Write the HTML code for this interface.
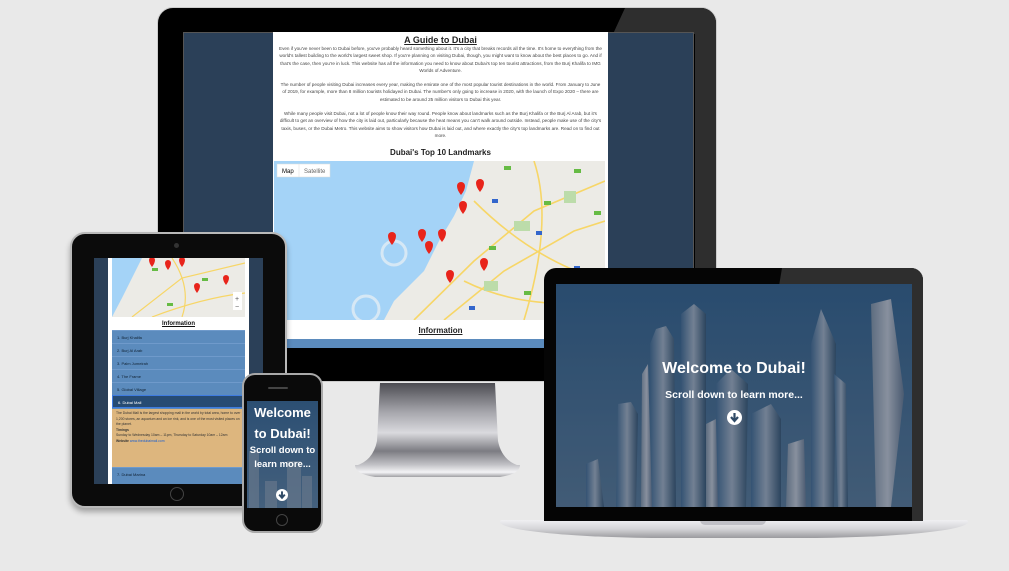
<!DOCTYPE html>
<html><head><meta charset="utf-8"><style>
*{margin:0;padding:0;box-sizing:border-box}
body{width:1009px;height:571px;background:#e9e9e9;position:relative;overflow:hidden;font-family:"Liberation Sans",sans-serif}
.a{position:absolute}
.p{font-size:4.6px;line-height:7.4px;color:#444;text-align:center}
.hero{font-family:"Liberation Sans Narrow","Liberation Sans",sans-serif;font-weight:bold;color:#fff;text-align:center}
.acc{position:absolute;left:0;width:100%;height:13px;font-size:4px;color:#123;padding-left:5px;line-height:13px;border-top:1px solid #6f9acb}
</style></head><body>

<!-- MONITOR -->
<div class="a" style="left:157px;top:7px;width:560px;height:375px;background:#000;border-radius:16px 16px 0 0;border:1px solid #ccc;overflow:hidden">
  <div class="a" style="left:455px;top:0;width:110px;height:26px;background:#2e2e2e;clip-path:polygon(12px 0,110px 0,110px 26px,0 26px)"></div>
  <div class="a" style="left:537px;top:0;width:30px;height:380px;background:#2e2e2e"></div>
</div>
<div class="a" style="left:183px;top:32px;width:511px;height:316px;background:#2b4058;border:1px solid #555"></div>
<div class="a" style="left:273px;top:32px;width:335px;height:316px;background:#fff;overflow:hidden">
  <div class="a" style="left:0;top:3px;width:100%;text-align:center;font-size:9px;font-weight:bold;text-decoration:underline;color:#222">A Guide to Dubai</div>
  <div class="a p" style="left:6px;top:13px;width:323px">Even if you've never been to Dubai before, you've probably heard something about it. It's a city that breaks records all the time. It's home to everything from the world's tallest building to the world's largest sweet shop. If you're planning on visiting Dubai, though, you might want to know about the best places to go. And if that's the case, then you're in luck. This website has all the information you need to know about Dubai's top ten tourist attractions, from the Burj Khalifa to IMG Worlds of Adventure.</div>
  <div class="a p" style="left:6px;top:49px;width:323px">The number of people visiting Dubai increases every year, making the emirate one of the most popular tourist destinations in the world. From January to June of 2019, for example, more than 8 million tourists holidayed in Dubai. The number's only going to increase in 2020, with the launch of Expo 2020 – there are estimated to be around 25 million visitors to Dubai this year.</div>
  <div class="a p" style="left:6px;top:78px;width:323px">While many people visit Dubai, not a lot of people know their way round. People know about landmarks such as the Burj Khalifa or the Burj Al Arab, but it's difficult to get an overview of how the city is laid out, particularly because the heat means you can't walk around outside. Instead, people make use of the city's taxis, buses, or the Dubai Metro. This website aims to show visitors how Dubai is laid out, and where exactly the city's top landmarks are. Read on to find out more.</div>
  <div class="a" style="left:0;top:116px;width:100%;text-align:center;font-size:8px;font-weight:bold;color:#222">Dubai's Top 10 Landmarks</div>
  <div class="a" style="left:0;top:294px;width:100%;text-align:center;font-size:8px;font-weight:bold;text-decoration:underline;color:#222">Information</div>
  <div class="a" style="left:0;top:307px;width:100%;height:9px;background:#5b8bbd"></div>
</div>
<svg class="a" style="left:274px;top:161px" width="331" height="159" viewBox="0 0 331 159">
  <rect width="331" height="159" fill="#a4d3f7"/>
  <polygon points="200,0 331,0 331,159 110,159 120,140 150,110 165,80 180,55 192,30" fill="#ecebe6"/>
  <circle cx="120" cy="92" r="12" fill="none" stroke="#d6e8f5" stroke-width="3"/>
  <circle cx="92" cy="148" r="13" fill="none" stroke="#d6e8f5" stroke-width="3"/>
  <g stroke="#f7d667" stroke-width="1.6" fill="none">
    <path d="M140,159 L200,100 L260,50 L331,20"/><path d="M170,159 L230,110 L300,70 L331,60"/>
    <path d="M200,40 Q260,100 331,120"/><path d="M260,0 Q280,60 250,159"/><path d="M190,120 Q250,150 331,140"/>
  </g>
  <g fill="#bcdcaa"><rect x="240" y="60" width="16" height="10"/><rect x="290" y="30" width="12" height="12"/><rect x="210" y="120" width="14" height="10"/></g>
  <g fill="#66bb44"><rect x="230" y="5" width="7" height="4"/><rect x="300" y="8" width="7" height="4"/><rect x="270" y="40" width="7" height="4"/><rect x="215" y="85" width="7" height="4"/><rect x="250" y="130" width="7" height="4"/><rect x="320" y="50" width="7" height="4"/></g>
  <g fill="#3366cc"><rect x="218" y="38" width="6" height="4"/><rect x="262" y="70" width="6" height="4"/><rect x="195" y="145" width="6" height="4"/><rect x="300" y="105" width="6" height="4"/></g>
  <rect x="3" y="3" width="53" height="13" fill="#fff" stroke="#ddd" stroke-width=".5"/>
  <text x="8" y="12" font-size="6" font-family="Liberation Sans" fill="#000">Map</text>
  <text x="30" y="12" font-size="6" font-family="Liberation Sans" fill="#666">Satellite</text>
  <line x1="25" y1="3" x2="25" y2="16" stroke="#ddd" stroke-width=".5"/>
  <g fill="#e8241b">
    <path d="M183,25 a4,4 0 1 1 8,0 q0,4 -4,9 q-4,-5 -4,-9z"/><path d="M202,22 a4,4 0 1 1 8,0 q0,4 -4,9 q-4,-5 -4,-9z"/>
    <path d="M185,44 a4,4 0 1 1 8,0 q0,4 -4,9 q-4,-5 -4,-9z"/><path d="M114,75 a4,4 0 1 1 8,0 q0,4 -4,9 q-4,-5 -4,-9z"/>
    <path d="M144,72 a4,4 0 1 1 8,0 q0,4 -4,9 q-4,-5 -4,-9z"/><path d="M164,72 a4,4 0 1 1 8,0 q0,4 -4,9 q-4,-5 -4,-9z"/>
    <path d="M151,84 a4,4 0 1 1 8,0 q0,4 -4,9 q-4,-5 -4,-9z"/><path d="M206,101 a4,4 0 1 1 8,0 q0,4 -4,9 q-4,-5 -4,-9z"/>
    <path d="M172,113 a4,4 0 1 1 8,0 q0,4 -4,9 q-4,-5 -4,-9z"/>
  </g>
</svg>
<!-- stand -->
<svg class="a" style="left:350px;top:381px" width="175" height="100" viewBox="0 0 175 100">
  <defs><linearGradient id="st" x1="0" y1="0" x2="0" y2="1"><stop offset="0" stop-color="#4c4c52"/><stop offset=".35" stop-color="#a6a6ac"/><stop offset=".6" stop-color="#dadade"/><stop offset=".82" stop-color="#7c7c82"/><stop offset="1" stop-color="#c8c8cc"/></linearGradient>
  <linearGradient id="bs" x1="0" y1="0" x2="0" y2="1"><stop offset="0" stop-color="#c4c4c8"/><stop offset=".6" stop-color="#f4f4f6"/><stop offset="1" stop-color="#a0a0a4"/></linearGradient></defs>
  <path d="M30,2 L145,2 L148,60 Q152,80 170,85 L5,85 Q23,80 27,60 Z" fill="url(#st)"/>
  <path d="M5,84 L170,84 Q170,93 150,96 L25,96 Q5,93 5,84Z" fill="url(#bs)"/>
</svg>

<!-- TABLET -->
<div class="a" style="left:70px;top:232px;width:217px;height:276px;background:#0b0b0b;border-radius:15px;border:2px solid #b9b9b9;box-shadow:0 4px 6px rgba(0,0,0,.3)"></div>
<div class="a" style="left:174px;top:243px;width:5px;height:5px;border-radius:50%;background:#333"></div>
<div class="a" style="left:170px;top:487px;width:14px;height:14px;border-radius:50%;border:1px solid #444"></div>
<div class="a" style="left:94px;top:258px;width:169px;height:226px;background:#2b4058;overflow:hidden">
  <div class="a" style="left:14px;top:0;width:141px;height:226px;background:#fff">
    <svg class="a" style="left:4px;top:0" width="133" height="59" viewBox="0 0 133 59">
      <rect width="133" height="59" fill="#ecebe6"/>
      <polygon points="0,0 30,0 10,40 0,59" fill="#a4d3f7"/>
      <g stroke="#f7d667" stroke-width="1.2" fill="none"><path d="M20,59 L70,20 L133,5"/><path d="M40,59 Q90,40 133,35"/><path d="M60,0 Q80,30 70,59"/></g>
      <g fill="#66bb44"><rect x="40" y="10" width="6" height="3"/><rect x="90" y="20" width="6" height="3"/><rect x="55" y="45" width="6" height="3"/></g>
      <g fill="#e8241b"><path d="M37,2 a3,3 0 1 1 6,0 q0,3 -3,7 q-3,-4 -3,-7z"/><path d="M53,5 a3,3 0 1 1 6,0 q0,3 -3,7 q-3,-4 -3,-7z"/><path d="M67,2 a3,3 0 1 1 6,0 q0,3 -3,7 q-3,-4 -3,-7z"/><path d="M111,20 a3,3 0 1 1 6,0 q0,3 -3,7 q-3,-4 -3,-7z"/><path d="M82,28 a3,3 0 1 1 6,0 q0,3 -3,7 q-3,-4 -3,-7z"/></g>
      <rect x="121" y="34" width="9" height="18" fill="#fff"/><text x="123" y="43" font-size="7" fill="#555">+</text><text x="123" y="51" font-size="7" fill="#555">−</text>
    </svg>
    <div class="a" style="left:0;top:63px;width:100%;text-align:center;font-size:6px;font-weight:bold;text-decoration:underline;color:#111">Information</div>
    <div class="a" style="left:4px;top:72px;width:133px;height:154px;background:#5b8bbd">
      <div class="acc" style="top:0">1. Burj Khalifa</div>
      <div class="acc" style="top:13px">2. Burj Al Arab</div>
      <div class="acc" style="top:26px">3. Palm Jumeirah</div>
      <div class="acc" style="top:39px">4. The Frame</div>
      <div class="acc" style="top:52px">5. Global Village</div>
      <div class="acc" style="top:65px;background:#264b73;color:#fff;border:1px solid #3e7be0">6. Dubai Mall</div>
      <div class="a" style="left:0;top:79px;width:133px;height:58px;background:#ddb67e;font-size:3.4px;line-height:5.5px;color:#333;padding:2px 4px">The Dubai Mall is the largest shopping mall in the world by total area, home to over 1,200 stores, an aquarium and an ice rink, and is one of the most visited places on the planet.<br><b>Timings</b><br>Sunday to Wednesday 10am – 11pm, Thursday to Saturday 10am – 12am<br><b>Website</b> <span style="color:#1a5fd0">www.thedubaimall.com</span></div>
      <div class="acc" style="top:137px">7. Dubai Marina</div>
    </div>
  </div>
</div>

<!-- LAPTOP -->
<div class="a" style="left:500px;top:520px;width:468px;height:18px;background:linear-gradient(#f0f0f2,#d4d4d7 50%,#9a9a9e);border-radius:2px 2px 40% 40%/2px 2px 100% 100%"></div>
<div class="a" style="left:700px;top:520px;width:66px;height:5px;background:#c0c0c6;border-radius:0 0 5px 5px"></div>
<div class="a" style="left:544px;top:268px;width:379px;height:253px;background:#050505;border-radius:12px 12px 0 0;overflow:hidden">
  <div class="a" style="left:235px;top:0;width:150px;height:18px;background:#2e2e2e;clip-path:polygon(3px 0,100% 0,100% 100%,0 100%)"></div>
  <div class="a" style="left:368px;top:0;width:12px;height:253px;background:#2e2e2e"></div>
</div>
<svg class="a" style="left:556px;top:284px" width="356" height="223" viewBox="0 0 356 223">
  <defs><linearGradient id="sky" x1="0" y1="0" x2="0" y2="1"><stop offset="0" stop-color="#2c5176"/><stop offset="1" stop-color="#4b6580"/></linearGradient>
  <linearGradient id="bd" x1="0" y1="0" x2="1" y2="0"><stop offset="0" stop-color="#3a5a7c"/><stop offset=".5" stop-color="#8893a4"/><stop offset="1" stop-color="#2f4862"/></linearGradient>
  <linearGradient id="bd2" x1="0" y1="0" x2="1" y2="0"><stop offset="0" stop-color="#6d7a8c"/><stop offset=".5" stop-color="#a3a7b2"/><stop offset="1" stop-color="#56647a"/></linearGradient></defs>
  <rect width="356" height="223" fill="url(#sky)"/>
  <g fill="url(#bd)">
    <polygon points="30,223 30,180 42,175 48,223"/>
    <polygon points="60,223 62,120 75,118 82,130 80,223"/>
    <polygon points="95,223 94,60 100,45 110,42 118,55 120,223"/>
    <polygon points="125,223 125,30 138,20 150,30 150,223"/>
    <polygon points="160,223 160,100 175,85 192,100 190,223"/>
    <polygon points="195,223 195,130 215,120 225,135 225,223"/>
    <polygon points="255,223 255,60 265,25 280,60 278,223"/>
    <polygon points="282,223 278,90 290,100 292,223"/>
  </g>
  <g fill="url(#bd2)">
    <polygon points="85,223 86,90 92,80 96,223"/>
    <polygon points="150,223 150,140 160,135 162,223"/>
    <polygon points="320,223 315,20 335,15 348,110 335,223"/>
    <polygon points="230,223 232,160 248,155 250,223"/>
  </g>
  <rect width="356" height="223" fill="#1c3552" opacity=".2"/>
</svg>
<div class="a hero" style="left:556px;top:360px;width:356px;font-size:16px">Welcome to Dubai!</div>
<div class="a hero" style="left:556px;top:389px;width:356px;font-size:10.5px">Scroll down to learn more...</div>
<div class="a" style="left:727px;top:410px;width:15px;height:15px;border-radius:50%;background:#fff"></div>
<svg class="a" style="left:727px;top:410px" width="15" height="15" viewBox="0 0 15 15"><path d="M7.5,3 V10 M4,7 L7.5,11 L11,7" stroke="#2f4a66" stroke-width="2.2" fill="none"/></svg>

<!-- PHONE -->
<div class="a" style="left:242px;top:373px;width:81px;height:160px;background:#0a0a0a;border-radius:13px;border:2px solid #a9a9a9"></div>
<div class="a" style="left:268px;top:387px;width:20px;height:2px;background:#444;border-radius:1px"></div>
<div class="a" style="left:276px;top:514px;width:12px;height:12px;border-radius:50%;border:1px solid #444"></div>
<div class="a" style="left:247px;top:401px;width:71px;height:107px;background:linear-gradient(#2c4f73,#44607d);overflow:hidden">
  <svg class="a" style="left:0;top:0" width="71" height="107"><g fill="#66778b" opacity=".7"><rect x="2" y="50" width="10" height="57"/><rect x="40" y="60" width="14" height="47"/><rect x="55" y="75" width="10" height="32"/><rect x="18" y="80" width="12" height="27"/></g></svg>
  <div class="a hero" style="left:0;top:1px;width:71px;font-size:13px;line-height:21px">Welcome to Dubai!</div>
  <div class="a hero" style="left:0;top:43px;width:71px;font-size:9.5px;line-height:14px">Scroll down to learn more...</div>
  <div class="a" style="left:29px;top:88px;width:12px;height:12px;border-radius:50%;background:#fff"></div>
  <svg class="a" style="left:29px;top:88px" width="12" height="12" viewBox="0 0 15 15"><path d="M7.5,3 V10 M4,7 L7.5,11 L11,7" stroke="#2f4a66" stroke-width="2.4" fill="none"/></svg>
</div>
</body></html>
